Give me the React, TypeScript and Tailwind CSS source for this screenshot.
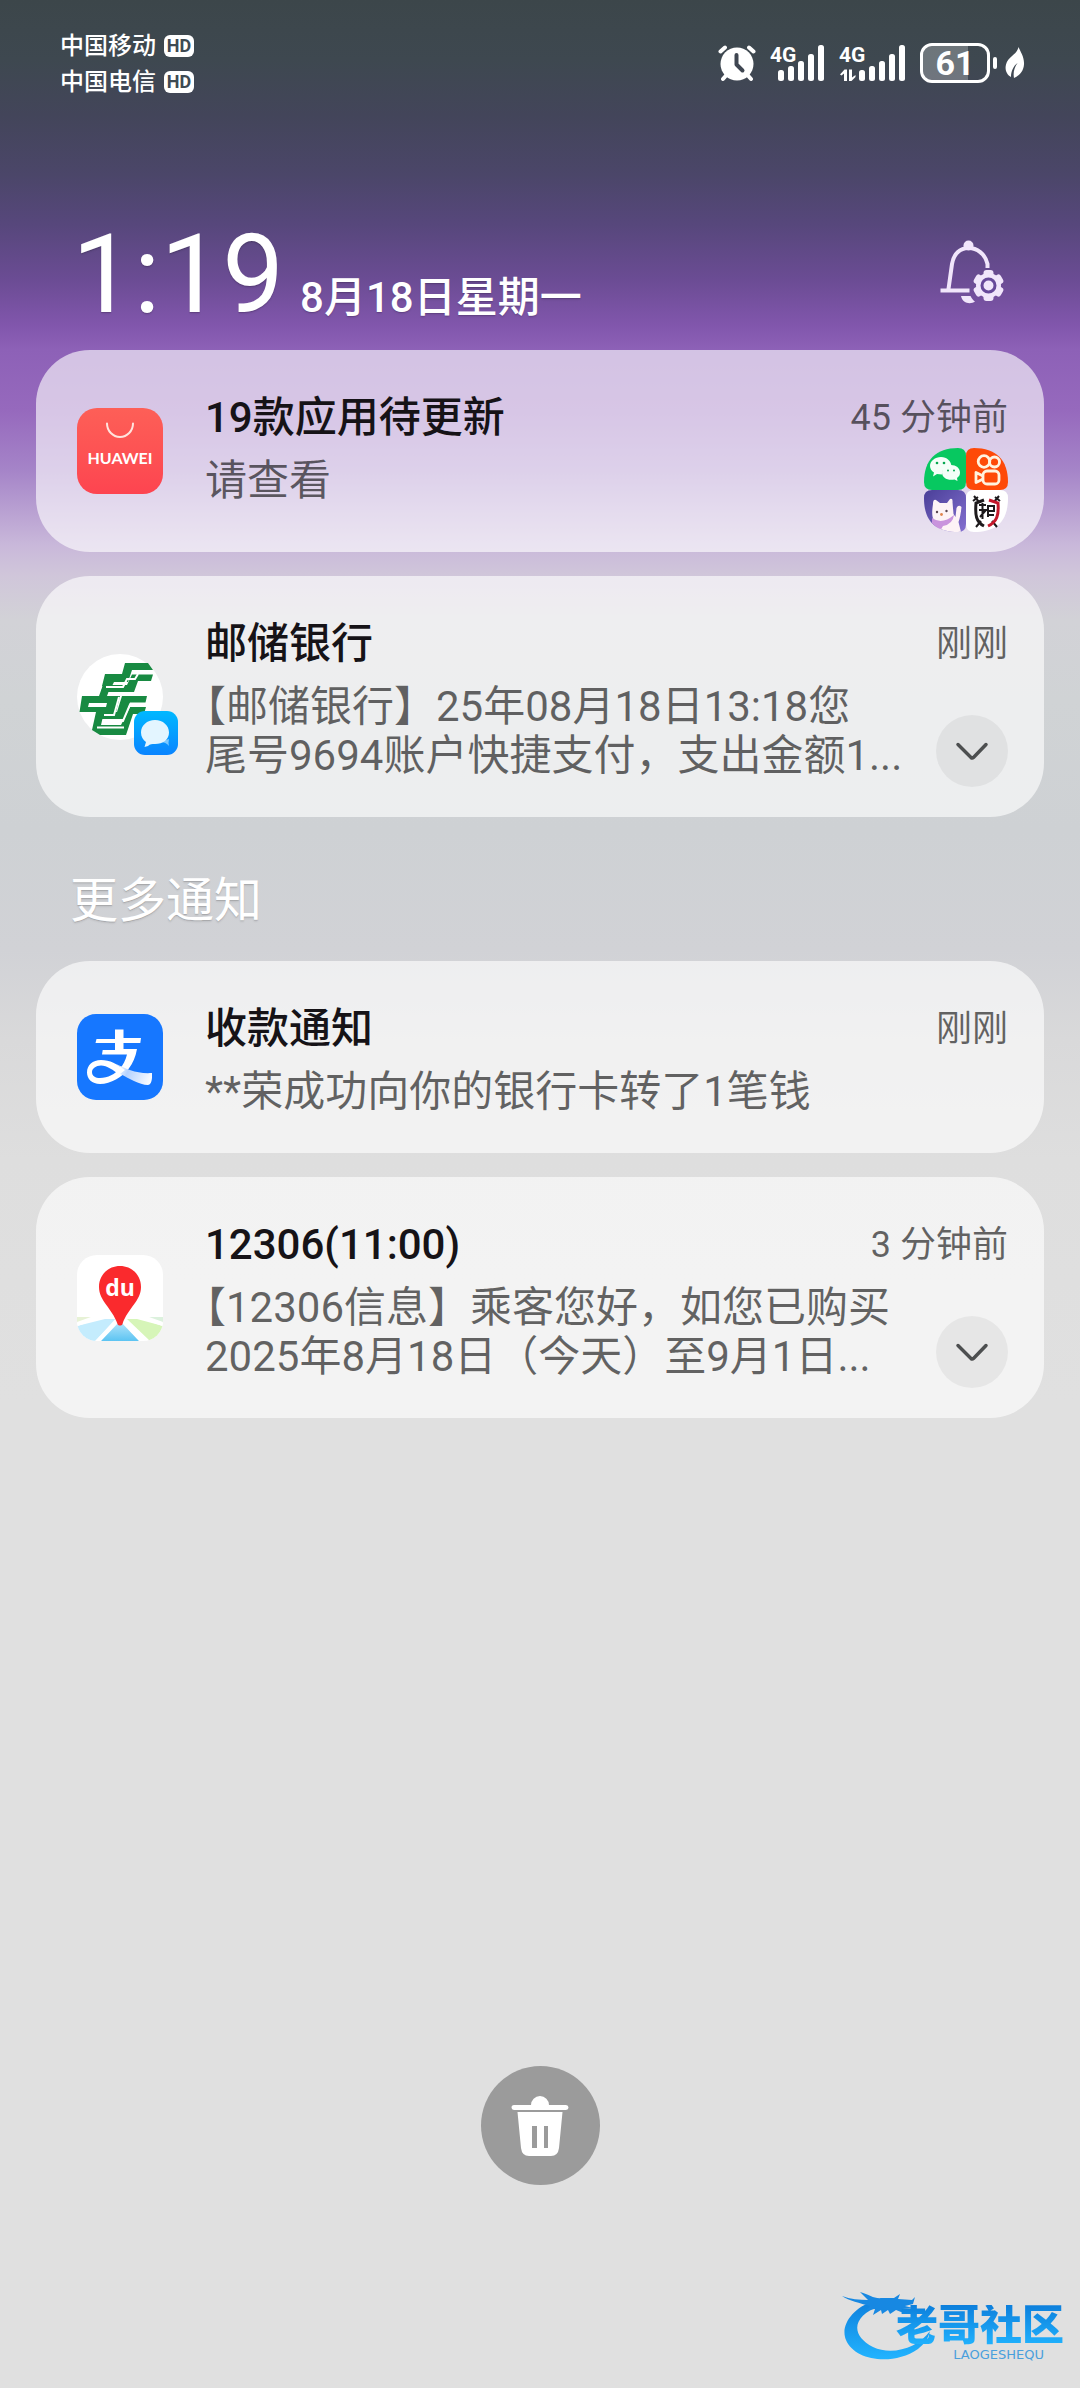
import type { ReactNode } from "react";

type NotificationProps = {
  icon: ReactNode;
  title: string;
  time: string;
  lines: string[];
  expandable?: boolean;
  extra?: ReactNode;
};

function HdBadge() {
  return (
    <span className="flex h-[22px] w-[30px] items-center justify-center rounded-md bg-white text-lg font-bold leading-none text-[#3e4a53]">
      HD
    </span>
  );
}

function AlarmIcon() {
  return (
    <svg className="h-[38px] w-[38px]" viewBox="0 0 38 38" fill="none">
      <circle cx="19" cy="20" r="16.5" fill="#fff" />
      <g stroke="#fff" strokeWidth="4" strokeLinecap="round">
        <path d="M2.5 7.5 7 3.5M31 3.5l4.500 4M8.500 31 5 35M29.500 31l3.500 4" />
      </g>
      <path
        d="M18.500 11v9.500l6 6"
        stroke="#3f4651"
        strokeWidth="4"
        strokeLinecap="round"
        strokeLinejoin="round"
      />
    </svg>
  );
}

function SignalIcon({ data = false }: { data?: boolean }) {
  const offset = data ? 12 : 0;
  return (
    <svg
      className={data ? "h-[46px] w-[67px]" : "h-[46px] w-[55px]"}
      viewBox={data ? "0 -4 67 46" : "0 -4 55 46"}
      fill="#fff"
    >
      <text x="0" y="18" fontSize="21" fontWeight="700" className="font-['Roboto',sans-serif]">
        4G
      </text>
      <rect x={offset + 8} y="26" width="6" height="11" rx="2.500" />
      <rect x={offset + 18} y="22" width="6" height="15" rx="2.500" />
      <rect x={offset + 28} y="17" width="6" height="20" rx="2.500" />
      <rect x={offset + 38} y="10" width="6" height="27" rx="2.500" />
      <rect x={offset + 48} y="1" width="6" height="36" rx="2.500" />
      {data && (
        <path d="M1 30.500 5.500 25.500H8V37H5v-7.500L2.500 31.500zM10 25.500h3v8L16.500 31v2L12.500 37H10z" />
      )}
    </svg>
  );
}

function Battery() {
  return (
    <div className="flex items-center gap-[3px]">
      <div className="relative flex h-10 w-[70px] items-center justify-center overflow-hidden rounded-xl border-[3px] border-white text-[34px] font-bold leading-none text-white">
        <span className="absolute inset-y-0 left-0 w-[45px] bg-white/25" />
        <span className="relative">61</span>
      </div>
      <span className="h-3 w-1 rounded-full bg-white" />
    </div>
  );
}

function LeafIcon() {
  return (
    <svg className="h-8 w-5" viewBox="0 0 20 32" fill="none">
      <path
        d="M13.500 0c2 5 6 10 5.500 17.500C18.500 25 13.500 29 9 31c-1-5 0-10 3.500-15C8.500 19 6 24 6 30 2 28-.5 23 1 17.500 3 9.500 12 8 13.500 0z"
        fill="#fff"
      />
    </svg>
  );
}

function BellSettingsIcon() {
  return (
    <svg className="h-16 w-16" viewBox="0 0 64 64" fill="none">
      <g stroke="#f1e6fb" strokeWidth="4" strokeLinecap="square">
        <path d="M8.500 49 12 24C13.500 14 20 8 28.500 8S45 13.500 47.500 24V26" />
        <path d="M2.500 50.500h25" />
      </g>
      <circle cx="28.500" cy="5.500" r="5" fill="#f1e6fb" />
      <path d="M21 56h9.500c1.500 3 3 4.500 4.500 5.500C31 64.500 22.500 64 21 56z" fill="#f1e6fb" />
      <g fill="#f1e6fb">
        <circle cx="48.500" cy="45.500" r="12.500" />
        <rect x="43.500" y="30" width="10" height="31" rx="3" />
        <rect x="43.500" y="30" width="10" height="31" rx="3" transform="rotate(60 48.500 45.500)" />
        <rect x="43.500" y="30" width="10" height="31" rx="3" transform="rotate(120 48.500 45.500)" />
      </g>
      <circle cx="48.500" cy="45.500" r="6.500" stroke="#67499a" strokeWidth="3" />
    </svg>
  );
}

function ChevronIcon() {
  return (
    <svg className="h-[34px] w-[34px]" viewBox="0 0 34 34" fill="none">
      <path
        d="M3 10.500 16 23.500q1.300 1 2.500 0L31 10.500"
        stroke="#4d4f50"
        strokeWidth="3.500"
        strokeLinecap="round"
      />
    </svg>
  );
}

function AppGalleryIcon() {
  return (
    <div className="flex h-[86px] w-[86px] flex-col items-center rounded-[20px] bg-linear-to-b from-[#fd5f57] to-[#fd4450] pt-3.5">
      <svg className="h-[18px] w-[30px]" viewBox="0 0 30 18" fill="none">
        <path d="M2 1.500a13 13.500 0 0 0 26 0" stroke="#ffe4de" strokeWidth="2" strokeLinecap="round" />
      </svg>
      <span className="mt-2 font-['Lato',sans-serif] text-base font-bold leading-5 text-white">
        HUAWEI
      </span>
    </div>
  );
}

function PostBankIcon() {
  return (
    <div className="relative h-[86px] w-[86px] rounded-full bg-white">
      <svg className="h-[86px] w-[86px]" viewBox="0 0 86 86" fill="none">
        <g fill="#188a42">
          <path d="M48 9h23l5 7H55l-4 12H37l-2 4H25l3-12h17z" />
          <path d="M55 20.500h21L74 27H61l-4 11H24l2-7h24z" />
          <path
            fillRule="evenodd"
            d="M26 31h8l-4 11h13l-4 16H2.500L5 42h17zM12 49l-1 4h18l1-4z"
          />
          <path d="M45 42h25l-1.500 6.500H53L47 65H21l3-7h16z" />
          <path d="M53 53h16l-2 7H56l-7 21H23l-8-5 4-18h8l-3 13h20z" />
        </g>
        <path
          d="M29 33h17l4-8h8l3-5M42 43l-5 18H27M71 50.500H53L46 67H28M20 73.500h27"
          stroke="#fff"
          strokeWidth="2"
        />
      </svg>
      <svg
        className="absolute -bottom-[15px] -right-[15px] h-11 w-11"
        viewBox="0 0 44 44"
        fill="none"
      >
        <defs>
          <linearGradient id="sms" x1="0" y1="0" x2="0" y2="1">
            <stop offset="0" stopColor="#00b8ff" />
            <stop offset="1" stopColor="#0a84ff" />
          </linearGradient>
        </defs>
        <rect width="44" height="44" rx="11" fill="url(#sms)" />
        <path d="M26 31q6 0 9 4-1-3 0-7z" fill="#7cc8ff" />
        <path
          d="M21 9c8 0 14 5.500 14 12.500S29 33 21 33c-3 0-5 0-7 2l-3.500 1 1.500-5c-3-2-5-5.500-5-9.500C7 14.500 13 9 21 9z"
          fill="#e3f5ff"
        />
      </svg>
    </div>
  );
}

function AlipayIcon() {
  return (
    <svg className="h-[86px] w-[86px]" viewBox="0 0 86 86" fill="none">
      <defs>
        <linearGradient id="ribbon" x1="42" y1="50" x2="76" y2="66" gradientUnits="userSpaceOnUse">
          <stop offset="0" stopColor="#fff" />
          <stop offset=".3" stopColor="#b5d2ff" />
          <stop offset="1" stopColor="#fff" />
        </linearGradient>
      </defs>
      <rect width="86" height="86" rx="19" fill="#1677ff" />
      <path d="M38 15.500h8.500v8.500H64l-.7 5H46.500v6H60c-1.500 8-4 14-8.500 20C45 63 34 70 23 70c-8 0-13-5-13-11.500C10 51 15.500 46 24 46c9 0 16 4 24 10l-5 5c-7-5-13-9.500-19-9.500-5 0-9 3-9 6.500 0 4 3.500 6 8 6 8 0 15-4 20-9.500 3-3.500 5.500-8 7-14H25l.7-4.500H38v-7H18.500l1-4H38z" fill="#fff" />
      <path d="M39 50c11 5 20 10 36 9v4c0 5-2 8-4 8-9 0-19-7-28-11l5-4z" fill="url(#ribbon)" />
    </svg>
  );
}

function BaiduMapIcon() {
  return (
    <svg className="h-[86px] w-[86px]" viewBox="0 0 86 86" fill="none">
      <defs>
        <clipPath id="mapTile">
          <rect width="86" height="86" rx="20" />
        </clipPath>
        <linearGradient id="road" x1="0" y1="0" x2="0" y2="1">
          <stop offset="0" stopColor="#b9e6fb" />
          <stop offset="1" stopColor="#5cc4f2" />
        </linearGradient>
      </defs>
      <g clipPath="url(#mapTile)">
        <rect width="86" height="86" fill="#fff" />
        <path d="M0 62h19L0 68z" fill="#e7f2d6" />
        <path d="M20 62h46l20 6v-6z" fill="#dcf1dd" />
        <path d="M0 71 28 64h12L18 86H0z" fill="#c4ecfd" />
        <path d="M86 71 60 64H50l23 22h13z" fill="#d6f5b8" />
        <path d="M43 66 62 86H24z" fill="url(#road)" />
        <path d="M20 62 0 69M66 62l20 7M40 65 20 87M46 65l20 22" stroke="#fff" strokeWidth="4" />
      </g>
      <path
        d="M43 11c12 0 21 9 21 21 0 14-13 21-18.500 37-1 2-4 2-5 0C35 53 22 46 22 32c0-12 9-21 21-21z"
        fill="#fa2a2d"
      />
      <text
        x="43"
        y="41"
        fontSize="23"
        fontWeight="700"
        textAnchor="middle"
        fill="#fff"
        className="font-['Open_Sans',sans-serif]"
      >
        du
      </text>
    </svg>
  );
}

function UpdateApps() {
  return (
    <svg className="h-[84px] w-[84px]" viewBox="0 0 84 84" fill="none">
      <defs>
        <linearGradient id="catBg" x1="0" y1="0" x2="1" y2="1">
          <stop offset="0" stopColor="#4a3f98" />
          <stop offset="1" stopColor="#8470d0" />
        </linearGradient>
        <clipPath id="catTile">
          <path d="M8 42h26q8 0 8 8v26q0 8-8 8C12 84 0 74 0 50q0-8 8-8z" />
        </clipPath>
      </defs>
      {/* wechat */}
      <path d="M34 0q8 0 8 8v26q0 8-8 8H8q-8 0-8-8C0 12 12 0 34 0z" fill="#07c860" />
      <path
        d="M17 9c6 0 10 4 10.500 9-6 .5-10 4-9.500 8.500l-5-.5-4 2.500 1-4c-2.500-1.500-4-4-4-6.500C6 13 11 9 17 9z"
        fill="#f4fff8"
      />
      <path
        d="M27 17c5 0 9 3 9 7.500 0 2.500-1 4-3 5.500l.5 3-3-1.500c-7 1.500-12.500-2-12.500-7S22 17 27 17z"
        fill="#f4fff8"
      />
      <g fill="#07a850">
        <circle cx="13" cy="15" r="1.300" />
        <circle cx="20" cy="15" r="1.300" />
        <circle cx="24" cy="22.500" r="1" />
        <circle cx="30" cy="22.500" r="1" />
      </g>
      {/* kuaishou */}
      <path d="M50 0c22 0 34 12 34 34q0 8-8 8H50q-8 0-8-8V8q0-8 8-8z" fill="#fe4a08" />
      <g stroke="#fff3df" strokeWidth="2.800">
        <circle cx="60" cy="13.500" r="5.800" />
        <circle cx="70.500" cy="14" r="5" />
        <rect x="59" y="23" width="16" height="13" rx="4" />
        <path d="m59 28-7-3.500v10l7-3.500" strokeLinejoin="round" />
      </g>
      {/* cat */}
      <g clipPath="url(#catTile)">
        <rect y="42" width="42" height="42" fill="url(#catBg)" />
        <path
          d="M9 56q0-5 3-4l4 3h7l3-4q3-1 2.500 3l1 12 2 3 1-9q2-4 5-1-1 10-3 15l3 12H16l-6-14q-3-3-1-16z"
          fill="#fdf3f6"
        />
        <path d="M8 70q10 7 22-3-1 9-11 11l-3 5-8-1z" fill="#c994dd" />
        <circle cx="13" cy="64" r="1.200" fill="#5b4650" />
        <circle cx="22.500" cy="63" r="1.200" fill="#5b4650" />
        <circle cx="17.500" cy="66.500" r="1.400" fill="#e0854e" />
      </g>
      {/* shield */}
      <path d="M50 42h26q8 0 8 8c0 24-12 34-34 34q-8 0-8-8V50q0-8 8-8z" fill="#fff" />
      <path d="m50 48 5 6M75 48l-5 6M57 73l-5 6M68 73l5 6M49 53l5-4M71 49l5 4" stroke="#1d1a1c" strokeWidth="2" />
      <path d="M60 78c-8-4-9-11-8-23l8-3" stroke="#1d1a1c" strokeWidth="3" />
      <path d="M64 78c9-4 11-11 10-23l-9-3" stroke="#c5182b" strokeWidth="3" />
      <path
        d="M55 57h7M58.500 55v16M55 62h7l-6 7M64 58h6v5h-6zM64 58v11M64 67h6"
        stroke="#1d1a1c"
        strokeWidth="2"
      />
    </svg>
  );
}

function TrashIcon() {
  return (
    <svg className="h-[60px] w-[58px]" viewBox="0 0 58 60" fill="#fff">
      <path d="M20 9a9 9 0 0 1 18 0h17a2.500 2.500 0 0 1 0 5H3a2.500 2.500 0 0 1 0-5z" />
      <path
        fillRule="evenodd"
        d="M6.500 16h45L48 52q-1 8-8 8H18q-7 0-8-8zM21 30v22h5V30zm12 0v22h4V30z"
      />
    </svg>
  );
}

function Watermark() {
  return (
    <div className="relative flex h-[72px] w-[222px] flex-col items-end pt-[13px]">
      <svg className="absolute left-0 top-0 h-[72px] w-[90px]" viewBox="0 0 90 72" fill="none">
        <defs>
          <linearGradient id="dragon" x1="0" y1="0" x2="0" y2="1">
            <stop offset="0" stopColor="#0d7fdc" />
            <stop offset="1" stopColor="#22b4ff" />
          </linearGradient>
        </defs>
        <path
          d="M32 9C10 16-2 34 4 48c8 20 46 27 72 9 6-5 10-10 12-18-12 17-38 25-57 16C8 43 10 24 38 14z"
          fill="url(#dragon)"
        />
        <path
          d="M0 4c8 3 18 4 26 4L18 0c10 3 14 7 22 6l12 0 6-4-2 5 14 1 3-3-2 7-8 2 8 2-11 1 4 5-10-4-6 4-2-4-6 4-1-4-8 5 2-6-8 1 3-4C18 11 7 9 0 4z"
          fill="#1788e2"
        />
      </svg>
      <span className="relative bg-linear-to-b from-[#0d7fdc] to-[#22b4ff] bg-clip-text text-[42px] font-black leading-[42px] text-transparent">
        老哥社区
      </span>
      <span className="relative mr-5 font-['DejaVu_Sans',sans-serif] text-[13px] leading-4 text-[#4a9fdc]">
        LAOGESHEQU
      </span>
    </div>
  );
}

function Notification({ icon, title, time, lines, expandable, extra }: NotificationProps) {
  return (
    <li className="flex rounded-[54px] bg-white/62 pl-[41px] pr-9">
      <div className="flex shrink-0 items-center">{icon}</div>
      <div className="ml-[42px] min-w-0 flex-1 pb-[37px] pt-9">
        <h2 className="text-[42px] font-medium leading-[64px] text-[#161317]">{title}</h2>
        <p className="mt-1.5 text-[42px] leading-[49px] text-black/60 [text-spacing-trim:trim-start]">
          {lines.map((line) => (
            <span key={line} className="block whitespace-nowrap">
              {line}
            </span>
          ))}
        </p>
      </div>
      <div className="flex shrink-0 flex-col items-end justify-between pt-[38px]">
        <time className="text-4xl leading-[60px] text-black/60">{time}</time>
        {extra}
        {expandable && (
          <button
            type="button"
            aria-label="展开"
            className="mb-[30px] flex h-[72px] w-[72px] items-center justify-center rounded-full bg-black/5"
          >
            <ChevronIcon />
          </button>
        )}
      </div>
    </li>
  );
}

export default function App() {
  return (
    <div className="flex min-h-screen flex-col bg-[linear-gradient(180deg,#3c464a_0px,#3e4850_60px,#43455a_115px,#4b4669_175px,#57477c_225px,#6b4c94_280px,#8156ac_325px,#8d61b7_350px,#9669bd_410px,#a584c8_470px,#c9b8da_545px,#d0c6da_575px,#d2d2d7_620px,#d0d3d5_700px,#ced1d4_830px,#d1d2d6_950px,#d9d9da_1040px,#dedede_1160px,#e0e0e0_1400px)] font-['Roboto','Noto_Sans_CJK_SC',sans-serif]">
      <header className="flex items-start justify-between pl-[60px] pr-[55px] pt-7 text-white">
        <div className="text-2xl font-medium leading-9">
          <div className="flex items-center gap-2">
            中国移动 <HdBadge />
          </div>
          <div className="flex items-center gap-2">
            中国电信 <HdBadge />
          </div>
        </div>
        <div className="mt-3 flex items-center gap-3.5">
          <AlarmIcon />
          <SignalIcon />
          <SignalIcon data />
          <div className="flex items-center gap-2">
            <Battery />
            <LeafIcon />
          </div>
        </div>
      </header>

      <div className="mt-[115px] flex items-end justify-between pl-[72px] pr-[76px] text-white">
        <div className="flex items-baseline gap-4 pb-[9px] text-shadow-sm">
          <time className="text-[110px] leading-[120px]">1:19</time>
          <span className="text-[42px] font-medium leading-[60px]">8月18日星期一</span>
        </div>
        <button type="button" aria-label="通知设置" className="mb-10">
          <BellSettingsIcon />
        </button>
      </div>

      <main className="mt-1.5 px-9">
        <ul className="space-y-6">
          <Notification
            icon={<AppGalleryIcon />}
            title="19款应用待更新"
            time="45 分钟前"
            lines={["请查看"]}
            extra={
              <div className="mb-5">
                <UpdateApps />
              </div>
            }
          />
          <Notification
            icon={<PostBankIcon />}
            title="邮储银行"
            time="刚刚"
            lines={["【邮储银行】25年08月18日13:18您", "尾号9694账户快捷支付，支出金额1..."]}
            expandable
          />
        </ul>

        <h1 className="mb-6 mt-12 pl-[34px] text-5xl leading-[72px] text-white text-shadow-sm">
          更多通知
        </h1>

        <ul className="space-y-6">
          <Notification
            icon={<AlipayIcon />}
            title="收款通知"
            time="刚刚"
            lines={["**荣成功向你的银行卡转了1笔钱"]}
          />
          <Notification
            icon={<BaiduMapIcon />}
            title="12306(11:00)"
            time="3 分钟前"
            lines={["【12306信息】乘客您好，如您已购买", "2025年8月18日（今天）至9月1日..."]}
            expandable
          />
        </ul>
      </main>

      <footer className="mt-auto flex flex-col pt-10">
        <button
          type="button"
          aria-label="清除全部通知"
          className="flex h-[119px] w-[119px] items-center justify-center self-center rounded-full bg-[#9b9b9b]"
        >
          <TrashIcon />
        </button>
        <div className="mb-6 mr-4 mt-[107px] self-end">
          <Watermark />
        </div>
      </footer>
    </div>
  );
}
